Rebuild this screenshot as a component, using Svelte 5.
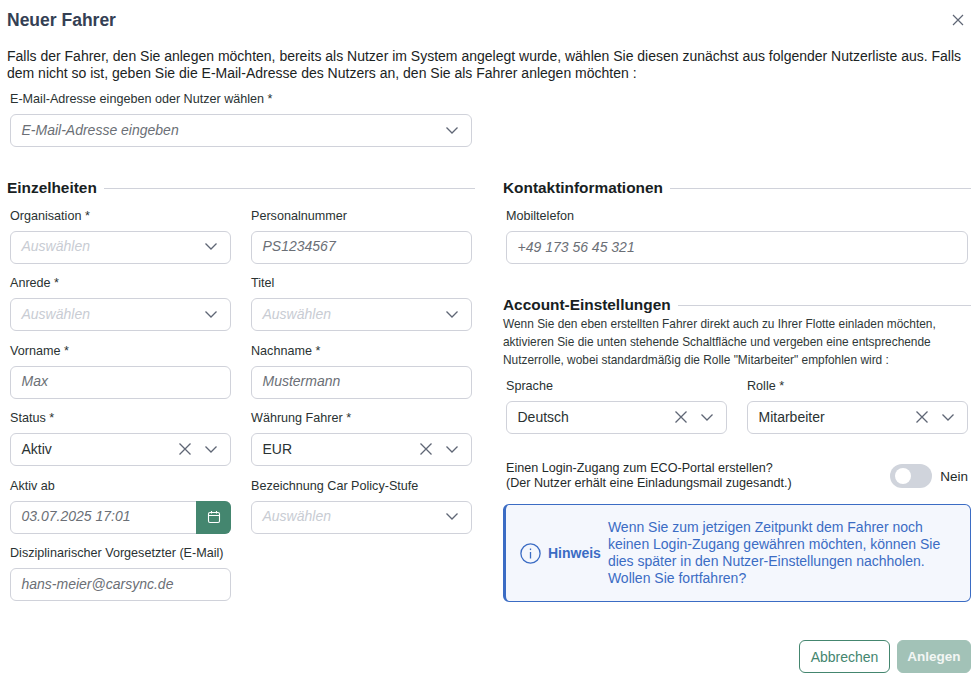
<script>
  const leftFields = [
    { label: 'Organisation *', placeholder: 'Auswählen', kind: 'select' },
    { label: 'Personalnummer', placeholder: 'PS1234567', kind: 'input' },
    { label: 'Anrede *', placeholder: 'Auswählen', kind: 'select' },
    { label: 'Titel', placeholder: 'Auswählen', kind: 'select' },
    { label: 'Vorname *', placeholder: 'Max', kind: 'input' },
    { label: 'Nachname *', placeholder: 'Mustermann', kind: 'input' },
    { label: 'Status *', value: 'Aktiv', kind: 'select' },
    { label: 'Währung Fahrer *', value: 'EUR', kind: 'select' },
    { label: 'Aktiv ab', placeholder: '03.07.2025 17:01', kind: 'date' },
    { label: 'Bezeichnung Car Policy-Stufe', placeholder: 'Auswählen', kind: 'select' },
    { label: 'Disziplinarischer Vorgesetzter (E-Mail)', placeholder: 'hans-meier@carsync.de', kind: 'input' }
  ];
</script>

{#snippet chevron()}
  <svg class="icon" width="14" height="14" viewBox="0 0 14 14" fill="none">
    <path d="M1.5 4.5 7 10l5.5-5.5" stroke="#5f6675" stroke-width="1.3" />
  </svg>
{/snippet}

{#snippet clear()}
  <svg class="icon clear" width="14" height="14" viewBox="0 0 14 14" fill="none">
    <path d="M1.5 1.5l11 11M12.5 1.5l-11 11" stroke="#5f6675" stroke-width="1.3" />
  </svg>
{/snippet}

{#snippet field(f)}
  <div class="field">
    <div class="label">{f.label}</div>
    {#if f.kind === 'input'}
      <div class="box"><span class="ph">{f.placeholder}</span></div>
    {:else if f.kind === 'date'}
      <div class="box date">
        <span class="ph">{f.placeholder}</span>
        <span class="calendar">
          <svg width="14" height="14" viewBox="0 0 14 14" fill="none" stroke="#fff" stroke-width="1.1">
            <rect x="1.5" y="2.5" width="11" height="10" rx="1.5" />
            <path d="M1.5 5.5h11M4.5 1v2.5M9.5 1v2.5" />
          </svg>
        </span>
      </div>
    {:else}
      <div class="box">
        {#if f.value}
          <span class="val">{f.value}</span>
          {@render clear()}
        {:else}
          <span class="ph light">{f.placeholder}</span>
        {/if}
        {@render chevron()}
      </div>
    {/if}
  </div>
{/snippet}

<div class="dialog">
  <header>
    <h2>Neuer Fahrer</h2>
    <svg width="12" height="12" viewBox="0 0 12 12" fill="none">
      <path d="M1 1l10 10M11 1 1 11" stroke="#5f6675" stroke-width="1.2" />
    </svg>
  </header>

  <p class="intro">
    Falls der Fahrer, den Sie anlegen möchten, bereits als Nutzer im System angelegt wurde, wählen Sie diesen zunächst aus folgender Nutzerliste aus. Falls dem nicht so ist, geben Sie die E-Mail-Adresse des Nutzers an, den Sie als Fahrer anlegen möchten :
  </p>

  <div class="top-field">
    <div class="label">E-Mail-Adresse eingeben oder Nutzer wählen *</div>
    <div class="box"><span class="ph">E-Mail-Adresse eingeben</span>{@render chevron()}</div>
  </div>

  <div class="columns">
    <section>
      <h3><span>Einzelheiten</span></h3>
      <div class="grid">
        {#each leftFields as f}
          {@render field(f)}
        {/each}
      </div>
    </section>

    <section>
      <h3><span>Kontaktinformationen</span></h3>
      <div class="inset">
        {@render field({ label: 'Mobiltelefon', placeholder: '+49 173 56 45 321', kind: 'input' })}
      </div>

      <h3 class="second"><span>Account-Einstellungen</span></h3>
      <p class="note">
        Wenn Sie den eben erstellten Fahrer direkt auch zu Ihrer Flotte einladen möchten, aktivieren Sie die unten stehende Schaltfläche und vergeben eine entsprechende Nutzerrolle, wobei standardmäßig die Rolle "Mitarbeiter" empfohlen wird :
      </p>
      <div class="grid two">
        {@render field({ label: 'Sprache', value: 'Deutsch', kind: 'select' })}
        {@render field({ label: 'Rolle *', value: 'Mitarbeiter', kind: 'select' })}
      </div>

      <div class="login">
        <div class="login-text">
          Einen Login-Zugang zum ECO-Portal erstellen?<br />
          (Der Nutzer erhält eine Einladungsmail zugesandt.)
        </div>
        <div class="toggle"><span class="knob"></span></div>
        <span class="toggle-label">Nein</span>
      </div>

      <div class="alert">
        <svg width="21" height="21" viewBox="0 0 21 21" fill="none" stroke="#3b6cc4" stroke-width="1.3">
          <circle cx="10.5" cy="10.5" r="9.6" />
          <path d="M10.5 9v6.5" />
          <path d="M10.5 5.5v1.6" />
        </svg>
        <strong>Hinweis</strong>
        <div class="alert-text">
          Wenn Sie zum jetzigen Zeitpunkt dem Fahrer noch keinen Login-Zugang gewähren möchten, können Sie dies später in den Nutzer-Einstellungen nachholen. Wollen Sie fortfahren?
        </div>
      </div>
    </section>
  </div>

  <footer>
    <button class="ghost">Abbrechen</button>
    <button class="primary">Anlegen</button>
  </footer>
</div>

<style>
  :global(body) {
    margin: 0;
    background: #fff;
  }

  .dialog {
    box-sizing: border-box;
    width: 980px;
    height: 685px;
    padding: 9px 9px 0 7px;
    font-family: "Liberation Sans", Arial, sans-serif;
    font-size: 14px;
    color: #1f2a2a;
    overflow: hidden;
  }

  header {
    display: flex;
    justify-content: space-between;
    align-items: center;
    height: 22px;
    padding-right: 7px;
  }

  h2 {
    margin: 0;
    font-size: 17.5px;
    font-weight: 700;
    color: #344054;
  }

  .intro {
    margin: 17px 0 0;
    font-size: 14px;
    line-height: 17px;
    color: #1b2323;
  }

  .top-field {
    width: 462px;
    margin: 9px 0 0 3px;
  }

  .label {
    height: 16px;
    line-height: 16px;
    margin-bottom: 7px;
    font-size: 12.6px;
    color: #2a3232;
    white-space: nowrap;
  }

  .box {
    box-sizing: border-box;
    display: flex;
    align-items: center;
    height: 33px;
    padding: 0 11px 1.6px 10.5px;
    background: #fff;
    border: 1px solid #d0d2da;
    border-radius: 6px;
  }

  .ph {
    flex: 1;
    font-style: italic;
    font-size: 14px;
    color: #6b6f76;
  }

  .ph.light {
    color: #c8ccd3;
  }

  .val {
    flex: 1;
    font-size: 14px;
    color: #2a3232;
  }

  .icon {
    flex: none;
    margin-right: 1px;
  }

  .clear {
    margin-right: 12px;
  }

  .date {
    padding-right: 0;
  }

  .calendar {
    display: flex;
    align-items: center;
    justify-content: center;
    align-self: stretch;
    width: 35px;
    margin: -1px -1px -2.6px 0;
    background: #44866f;
    border-radius: 0 6px 6px 0;
  }

  .columns {
    display: grid;
    grid-template-columns: 468px 468px;
    gap: 28px;
    margin-top: 32px;
  }

  h3 {
    display: flex;
    align-items: center;
    gap: 7px;
    margin: 0;
    height: 18px;
    font-size: 15.4px;
    font-weight: 700;
    color: #18211f;
    white-space: nowrap;
  }

  h3::after {
    content: "";
    flex: 1;
    height: 1px;
    background: #d0d2da;
  }

  .grid {
    display: grid;
    grid-template-columns: 221px 221px;
    column-gap: 20px;
    row-gap: 11.5px;
    margin: 10.75px 0 0 3px;
  }

  .inset {
    margin: 11px 3px 0;
  }

  .second {
    margin-top: 32px;
  }

  .note {
    margin: 1px 0 0;
    font-size: 11.9px;
    line-height: 18px;
    color: #2f3838;
  }

  .two {
    margin-top: 9px;
  }

  .login {
    display: flex;
    align-items: center;
    margin: 27px 3px 0;
    height: 30px;
  }

  .login-text {
    flex: 1;
    font-size: 12.6px;
    line-height: 15px;
    color: #1f2a2a;
  }

  .toggle {
    box-sizing: border-box;
    width: 42px;
    height: 24px;
    padding: 4px 5px;
    margin-right: 8px;
    background: #d0d4dc;
    border-radius: 12px;
  }

  .knob {
    display: block;
    width: 16px;
    height: 16px;
    background: #fff;
    border-radius: 50%;
  }

  .toggle-label {
    font-size: 13.5px;
  }

  .alert {
    box-sizing: border-box;
    display: flex;
    align-items: center;
    height: 98px;
    margin-top: 13px;
    padding: 0 28px 0 14px;
    background: #f4f7fd;
    border: 1px solid #3b6cc4;
    border-left-width: 3px;
    border-radius: 6px;
    color: #3b6cc4;
  }

  .alert svg {
    flex: none;
  }

  .alert strong {
    margin: 0 7px 0 7px;
    font-size: 14px;
  }

  .alert-text {
    font-size: 14px;
    line-height: 17px;
  }

  footer {
    display: flex;
    justify-content: flex-end;
    gap: 7px;
    margin-top: 38px;
  }

  button {
    box-sizing: border-box;
    height: 33px;
    border-radius: 6px;
    font-family: inherit;
    font-size: 14px;
  }

  .ghost {
    width: 91px;
    background: #fff;
    border: 1px solid #44866f;
    color: #44866f;
  }

  .primary {
    width: 74px;
    background: #a2c2b7;
    border: 1px solid #a2c2b7;
    color: #f2f6f4;
    font-size: 13.5px;
    font-weight: 700;
  }
</style>
